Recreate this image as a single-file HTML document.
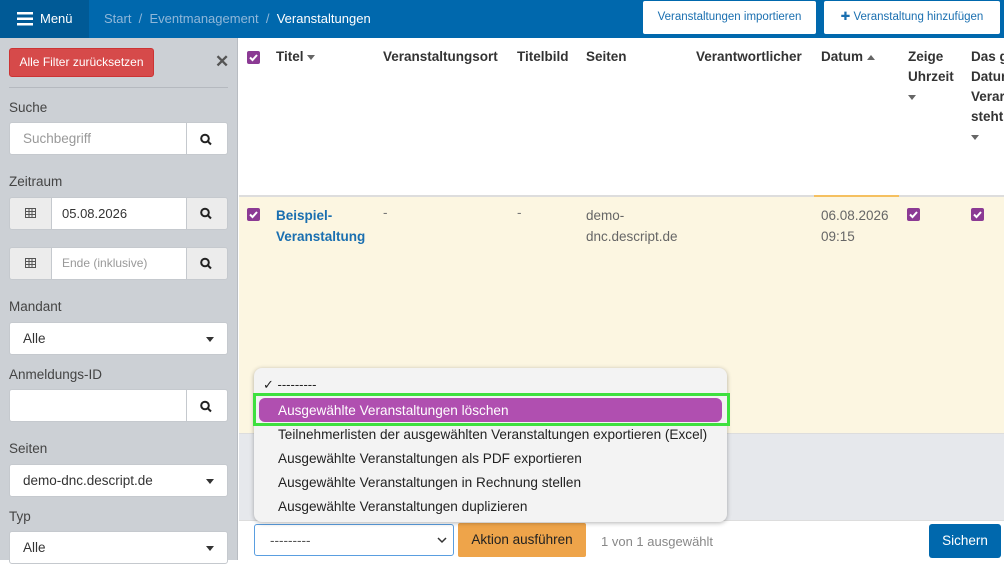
<!DOCTYPE html>
<html><head><meta charset="utf-8">
<style>
*{box-sizing:border-box;margin:0;padding:0}
body{width:1004px;height:560px;overflow:hidden;font-family:"Liberation Sans",Arial,sans-serif;font-size:13.5px;color:#333;position:relative;background:#fff}
.abs{position:absolute}
.top{left:0;top:0;width:1004px;height:38px;background:#0068ad}
.menu{left:0;top:0;width:89px;height:38px;background:#005a96;color:#fff;font-size:13px}
.crumb{left:104px;top:11px;color:#8fb7d9;font-size:13px;white-space:nowrap}
.crumb b{color:#fff;font-weight:normal}
.tbtn{top:1px;height:33px;background:#fff;border-radius:2px;color:#1a6fb0;font-size:11.5px;line-height:33px;text-align:center}
.side{left:0;top:38px;width:238px;height:522px;background:#ccd0d5;border-right:1px solid #b8bcc2}
.lbl{left:9px;font-size:13.5px;color:#444}
.inp{left:9px;width:219px;height:33px;background:#fff;border:1px solid #c5c9ce;border-radius:3px}
.addon{position:absolute;top:-1px;height:33px;border:1px solid #c5c9ce;background:#fff}
.txt{position:absolute;top:8px;font-size:13.5px}
.caret{position:absolute;right:13px;top:14px;border-left:4px solid transparent;border-right:4px solid transparent;border-top:5px solid #333}
.th{top:47px;font-weight:bold;font-size:13.5px;color:#333;line-height:20px}
.tc{border-left:4px solid transparent;border-right:4px solid transparent;border-top:5px solid #666;display:inline-block;vertical-align:middle}
.cb{width:13px;height:13px;background:#8b3a94;border-radius:2px}
.cb svg{display:block}
.mi{left:278px;font-size:13.6px;color:#222;white-space:nowrap}
</style></head><body>
<div class="abs top"></div>
<div class="abs menu">
<svg class="abs" style="left:17px;top:12px" width="16" height="14"><rect y="0" width="16" height="2.5" fill="#fff"/><rect y="5.5" width="16" height="2.5" fill="#fff"/><rect y="11" width="16" height="2.5" fill="#fff"/></svg>
<span class="abs" style="left:40px;top:11px">Menü</span></div>
<div class="abs crumb">Start &nbsp;/&nbsp; Eventmanagement &nbsp;/&nbsp; <b>Veranstaltungen</b></div>
<div class="abs tbtn" style="left:643px;width:173px">Veranstaltungen importieren</div>
<div class="abs tbtn" style="left:824px;width:176px">✚ Veranstaltung hinzufügen</div>

<div class="abs side"></div>
<div class="abs" style="left:9px;top:48px;width:145px;height:29px;background:#d64a4a;border:1px solid #c33;border-radius:3px;color:#fff;font-size:12px;text-align:center;line-height:27px">Alle Filter zurücksetzen</div>
<div class="abs" style="left:215px;top:52px;font-size:17px;color:#555;font-weight:bold">✕</div>
<div class="abs" style="left:9px;top:87px;width:219px;height:1px;background:#b5b9bf"></div>
<div class="abs lbl" style="top:100px">Suche</div>
<div class="abs inp" style="top:122px"><span class="txt" style="left:13px;color:#999">Suchbegriff</span><div class="addon" style="left:176px;width:42px;border-radius:0 3px 3px 0"></div></div>
<div class="abs lbl" style="top:174px">Zeitraum</div>
<div class="abs inp" style="top:197px;background:#ececec"><div class="addon" style="left:41px;width:136px;background:#fff"></div><span class="txt" style="left:52px;font-size:13px">05.08.2026</span></div>
<div class="abs inp" style="top:247px;background:#ececec"><div class="addon" style="left:41px;width:136px;background:#fff"></div><span class="txt" style="left:52px;color:#999;font-size:12px">Ende (inklusive)</span></div>
<div class="abs lbl" style="top:299px">Mandant</div>
<div class="abs inp" style="top:322px"><span class="txt" style="left:13px">Alle</span><div class="caret"></div></div>
<div class="abs lbl" style="top:367px">Anmeldungs-ID</div>
<div class="abs inp" style="top:389px"><div class="addon" style="left:176px;width:42px;border-radius:0 3px 3px 0"></div></div>
<div class="abs lbl" style="top:441px">Seiten</div>
<div class="abs inp" style="top:464px"><span class="txt" style="left:13px">demo-dnc.descript.de</span><div class="caret"></div></div>
<div class="abs lbl" style="top:509px">Typ</div>
<div class="abs inp" style="top:531px"><span class="txt" style="left:13px">Alle</span><div class="caret"></div></div>
<svg class="abs" style="left:0;top:0" width="238" height="560">
<g fill="none" stroke="#222" stroke-width="2"><circle cx="205" cy="138.5" r="3.8"/><line x1="208" y1="141.5" x2="211" y2="144.5"/>
<circle cx="205" cy="212.5" r="3.8"/><line x1="208" y1="215.5" x2="211" y2="218.5"/>
<circle cx="205" cy="262.5" r="3.8"/><line x1="208" y1="265.5" x2="211" y2="268.5"/>
<circle cx="205" cy="405.5" r="3.8"/><line x1="208" y1="408.5" x2="211" y2="411.5"/></g>
<g fill="none" stroke="#555" stroke-width="1"><rect x="25.5" y="208.5" width="10" height="9"/><line x1="25" y1="211.5" x2="36" y2="211.5"/><line x1="29" y1="209" x2="29" y2="217"/><line x1="32" y1="209" x2="32" y2="217"/><line x1="25" y1="214.5" x2="36" y2="214.5"/>
<rect x="25.5" y="258.5" width="10" height="9"/><line x1="25" y1="261.5" x2="36" y2="261.5"/><line x1="29" y1="259" x2="29" y2="267"/><line x1="32" y1="259" x2="32" y2="267"/><line x1="25" y1="264.5" x2="36" y2="264.5"/></g>
</svg>

<div class="abs" style="left:239px;top:38px;width:765px;height:158px;background:#fff"></div>
<div class="abs" style="left:239px;top:195px;width:765px;height:2px;background:#ddd"></div>
<div class="abs" style="left:814px;top:195px;width:85px;height:2px;background:#f5c060"></div>
<div class="abs" style="left:239px;top:197px;width:765px;height:236px;background:#fcf6e1"></div>
<div class="abs" style="left:239px;top:433px;width:765px;height:87px;background:#e6e8ec;border-top:1px solid #ddd"></div>
<div class="abs" style="left:239px;top:520px;width:765px;height:40px;background:#fff;border-top:1px solid #ddd"></div>

<div class="abs cb" style="left:247px;top:51px"><svg width="13" height="13"><path d="M3 6.5l2.5 2.5 4.5-5" stroke="#fff" stroke-width="2" fill="none"/></svg></div>
<div class="abs th" style="left:276px">Titel <span class="tc"></span></div>
<div class="abs th" style="left:383px">Veranstaltungsort</div>
<div class="abs th" style="left:517px">Titelbild</div>
<div class="abs th" style="left:586px">Seiten</div>
<div class="abs th" style="left:696px">Verantwortlicher</div>
<div class="abs th" style="left:821px">Datum <span class="tc" style="border-top:0;border-bottom:5px solid #666"></span></div>
<div class="abs th" style="left:908px">Zeige<br>Uhrzeit<br><span class="tc"></span></div>
<div class="abs th" style="left:971px;white-space:nowrap">Das g<br>Datur<br>Verar<br>steht<br><span class="tc"></span></div>

<div class="abs cb" style="left:247px;top:208px"><svg width="13" height="13"><path d="M3 6.5l2.5 2.5 4.5-5" stroke="#fff" stroke-width="2" fill="none"/></svg></div>
<div class="abs" style="left:276px;top:205px;font-weight:bold;color:#1a6fb0;line-height:21px">Beispiel-<br>Veranstaltung</div>
<div class="abs" style="left:383px;top:205px;color:#777">-</div>
<div class="abs" style="left:517px;top:205px;color:#777">-</div>
<div class="abs" style="left:586px;top:205px;color:#666;line-height:21px">demo-<br>dnc.descript.de</div>
<div class="abs" style="left:821px;top:205px;color:#666;line-height:21px">06.08.2026<br>09:15</div>
<div class="abs cb" style="left:907px;top:208px"><svg width="13" height="13"><path d="M3 6.5l2.5 2.5 4.5-5" stroke="#fff" stroke-width="2" fill="none"/></svg></div>
<div class="abs cb" style="left:971px;top:208px"><svg width="13" height="13"><path d="M3 6.5l2.5 2.5 4.5-5" stroke="#fff" stroke-width="2" fill="none"/></svg></div>

<div class="abs" style="left:254px;top:524px;width:200px;height:32px;border:1px solid #5a9ee0;border-radius:3px;background:#fff"><span class="abs" style="left:15px;top:8px;color:#555">---------</span><svg class="abs" style="left:182px;top:12px" width="10" height="7"><path d="M1 1l4 4 4-4" stroke="#333" stroke-width="1.5" fill="none"/></svg></div>
<div class="abs" style="left:458px;top:523px;width:128px;height:34px;background:#eea44a;border-radius:2px;text-align:center;line-height:34px;color:#222;font-size:13.5px">Aktion ausführen</div>
<div class="abs" style="left:601px;top:534px;color:#888;font-size:13px">1 von 1 ausgewählt</div>
<div class="abs" style="left:929px;top:524px;width:72px;height:34px;background:#0068ad;border-radius:3px;color:#fff;text-align:center;line-height:34px;font-size:13.5px">Sichern</div>

<div class="abs" style="left:254px;top:368px;width:473px;height:154px;background:#f3f3f3;border-radius:8px;box-shadow:0 1px 5px rgba(0,0,0,.3)"></div>
<div class="abs" style="left:263px;top:377px;font-size:13px;color:#222">✓ ---------</div>
<div class="abs" style="left:253px;top:393px;width:477px;height:33px;border:3px solid #3ee03e"></div>
<div class="abs" style="left:259px;top:398px;width:463px;height:24px;background:#b04fb0;border-radius:6px"></div>
<div class="abs mi" style="top:403px;color:#fff">Ausgewählte Veranstaltungen löschen</div>
<div class="abs mi" style="top:427px">Teilnehmerlisten der ausgewählten Veranstaltungen exportieren (Excel)</div>
<div class="abs mi" style="top:451px">Ausgewählte Veranstaltungen als PDF exportieren</div>
<div class="abs mi" style="top:475px">Ausgewählte Veranstaltungen in Rechnung stellen</div>
<div class="abs mi" style="top:499px">Ausgewählte Veranstaltungen duplizieren</div>
</body></html>
